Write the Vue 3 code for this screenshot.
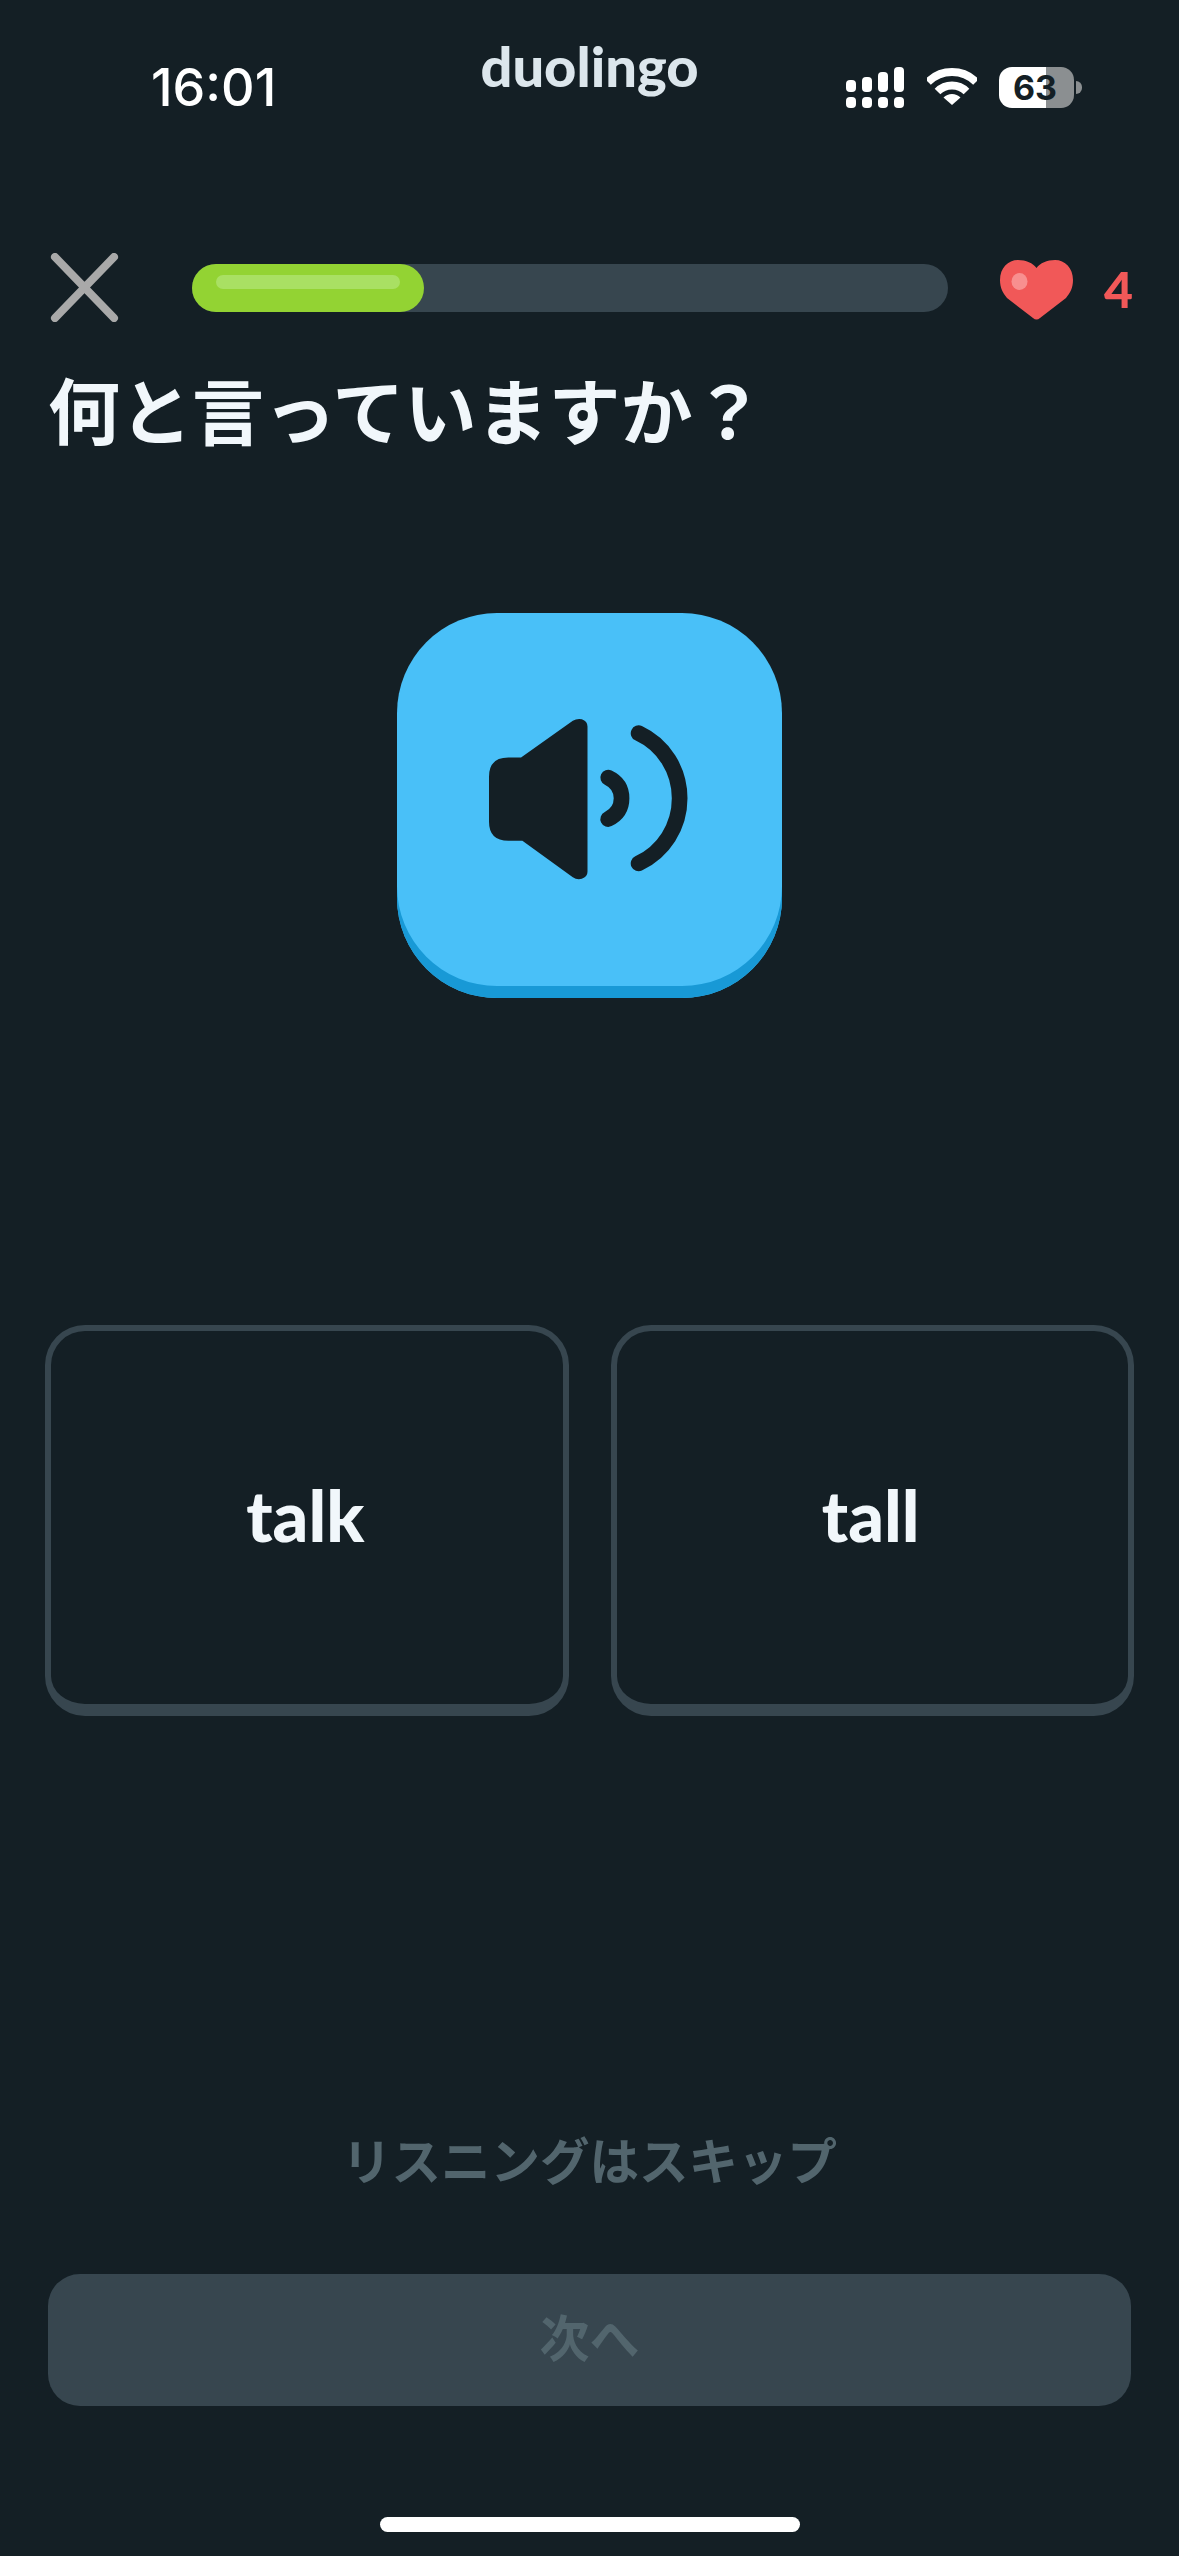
<script setup>
import { ref } from "vue";

const progress = ref(30.7);
const hearts = ref(4);
const battery = ref(63);
const choices = ["talk", "tall"];
const selected = ref(null);

const signalTop = [
  { x: 0, y: 13, h: 12 },
  { x: 16, y: 10, h: 15 },
  { x: 32, y: 5, h: 20 },
  { x: 48, y: 0, h: 25 },
];
</script>

<template>
  <div class="screen">
    <header class="status">
      <span class="time">16:01</span>
      <span class="logo">duolingo</span>
      <div class="status-icons">
        <svg class="signal" width="58" height="41" viewBox="0 0 58 41">
          <rect v-for="b in signalTop" :key="b.x" :x="b.x" :y="b.y" :height="b.h" width="10" rx="4" />
          <rect v-for="b in signalTop" :key="'d' + b.x" :x="b.x" y="30" height="11" width="10" rx="4" />
        </svg>
        <svg class="wifi" width="50" height="38" viewBox="0 0 50 38">
          <path d="M1 14A34 34 0 0 1 49 14" />
          <path d="M10.5 23.5A20.5 20.5 0 0 1 39.5 23.5" />
          <path class="wedge" d="M25 37 16.5 29.5A12 12 0 0 1 33.5 29.5Z" />
        </svg>
        <div class="battery">
          <span class="battery-level">{{ battery }}</span>
          <i class="battery-nub"></i>
        </div>
      </div>
    </header>

    <div class="lesson-bar">
      <svg class="close" width="69" height="69" viewBox="0 0 69 69">
        <path d="M5 4 64 65M64 4 5 65" />
      </svg>
      <div class="track">
        <div class="fill" :style="{ width: progress + '%' }">
          <i class="shine"></i>
        </div>
      </div>
      <svg class="heart" width="73" height="60" viewBox="0 0 73 60">
        <path d="M36.5 8C33 3 26 0 18 0 8 0 0 8 0 20 0 28 3 33 7 38L33 58Q36.5 61 40 58L66 38C70 33 73 28 73 20 73 8 65 0 55 0 47 0 40 3 36.5 8Z" />
        <ellipse cx="19.5" cy="21.5" rx="8" ry="8.5" />
      </svg>
      <span class="hearts">{{ hearts }}</span>
    </div>

    <h1 class="prompt">何と言っていますか？</h1>

    <button class="speaker">
      <svg width="199" height="162" viewBox="327 355 596 484">
        <path class="cone" d="M385 473H423L578 363Q590 355 605 358 622 364 622 380V815Q622 830 605 836 590 840 578 831L427 722H385Q327 722 327 665V530Q327 473 385 473Z" />
        <path class="wave" d="M684 533Q724 552 724 595 724 638 684 657" />
        <path class="wave" d="M775 400C850 435 898 510 898 595 898 680 850 755 775 790" />
      </svg>
    </button>

    <div class="choices">
      <button
        v-for="c in choices"
        :key="c"
        class="choice"
        :class="{ active: selected === c }"
        @click="selected = c"
      >
        {{ c }}
      </button>
    </div>

    <footer class="actions">
      <button class="skip">リスニングはスキップ</button>
      <button class="next" disabled>次へ</button>
      <div class="home-bar"></div>
    </footer>
  </div>
</template>

<style scoped>
* {
  box-sizing: border-box;
}
button {
  border: 0;
  background: none;
  padding: 0;
  font: inherit;
}
.screen {
  width: 1179px;
  height: 2556px;
  background: #141f25;
  display: flex;
  flex-direction: column;
  font-family: "Noto Sans CJK JP", "Noto Sans", sans-serif;
  overflow: hidden;
}

.status {
  height: 130px;
  display: grid;
  grid-template-columns: 1fr auto 1fr;
  align-items: start;
}
.time {
  font-family: Inter, sans-serif;
  font-size: 52px;
  font-weight: 500;
  line-height: 62px;
  color: #fff;
  margin: 57px 0 0 151px;
}
.logo {
  font-family: Lato, sans-serif;
  font-size: 56px;
  font-weight: 900;
  line-height: 60px;
  color: #dce6ec;
  margin-top: 36px;
}
.status-icons {
  display: flex;
  justify-content: flex-end;
  align-items: flex-start;
  padding: 67px 105px 0 0;
}
.signal {
  fill: #fff;
}
.wifi {
  margin: 1px 0 0 23px;
  fill: none;
  stroke: #fff;
  stroke-width: 8;
}
.wifi .wedge {
  fill: #fff;
  stroke: none;
}
.battery {
  position: relative;
  width: 75px;
  height: 41px;
  margin-left: 22px;
  border-radius: 13px;
  background: linear-gradient(90deg, #fff 63%, #8b8f91 0);
  display: flex;
  align-items: center;
  justify-content: center;
}
.battery-level {
  font-family: Inter, sans-serif;
  font-size: 34px;
  font-weight: 700;
  color: #141f25;
  line-height: 1;
  margin-right: 3px;
}
.battery-nub {
  position: absolute;
  left: 77px;
  top: 14px;
  width: 6px;
  height: 13px;
  border-radius: 0 6px 6px 0;
  background: #8b8f91;
}

.lesson-bar {
  display: flex;
  align-items: center;
  margin-top: 123px;
  padding: 0 46px 0 50px;
  height: 69px;
}
.close {
  stroke: #a9a9a9;
  stroke-width: 8;
  stroke-linecap: round;
  fill: none;
  flex: none;
}
.track {
  flex: 1;
  height: 48px;
  margin: 0 52px 0 73px;
  border-radius: 24px;
  background: #37464f;
}
.fill {
  height: 100%;
  border-radius: 24px;
  background: #93d333;
  padding: 11px 24px 0;
}
.shine {
  display: block;
  height: 14px;
  border-radius: 7px;
  background: #a9e063;
}
.heart {
  flex: none;
  fill: #f15858;
  margin-top: 5px;
}
.heart ellipse {
  fill: #f88f8f;
}
.hearts {
  font-family: Lato, sans-serif;
  font-size: 50px;
  font-weight: 900;
  line-height: 1;
  color: #f15858;
  margin: 2px 0 0 31px;
}

.prompt {
  margin: 41px 0 0 48px;
  font-size: 72px;
  font-weight: 700;
  line-height: 90px;
  color: #f1f7fb;
}

.speaker {
  align-self: center;
  width: 385px;
  height: 385px;
  margin-top: 160px;
  border-radius: 100px;
  background: #49c0f8;
  box-shadow: inset 0 -12px 0 #1899d6;
  padding: 0 3px 14px 0;
  display: flex;
  align-items: center;
  justify-content: center;
}
.cone {
  fill: #141f25;
}
.wave {
  fill: none;
  stroke: #141f25;
  stroke-width: 47;
  stroke-linecap: round;
}

.choices {
  display: grid;
  grid-template-columns: 1fr 1fr;
  gap: 42px;
  height: 391px;
  margin: 327px 45px 0 45px;
}
.choice {
  border: 6px solid #37464f;
  border-bottom-width: 12px;
  border-radius: 40px;
  font-family: Lato, sans-serif;
  font-size: 70px;
  font-weight: 900;
  color: #f1f7fb;
  padding: 0 3px 6px 0;
}
.choice.active {
  border-color: #49c0f8;
}

.actions {
  margin-top: auto;
  display: flex;
  flex-direction: column;
  align-items: center;
  padding: 0 48px 24px;
}
.skip {
  font-size: 49.5px;
  font-weight: 700;
  line-height: 70px;
  color: #52656d;
}
.next {
  width: 100%;
  height: 132px;
  margin-top: 80px;
  border-radius: 32px;
  background: #37464f;
  font-size: 50px;
  font-weight: 700;
  color: #52656d;
  padding-bottom: 10px;
}
.home-bar {
  width: 420px;
  height: 15px;
  margin-top: 111px;
  border-radius: 8px;
  background: #fff;
}
</style>

<style>
html,
body {
  background: #141f25;
}
</style>
